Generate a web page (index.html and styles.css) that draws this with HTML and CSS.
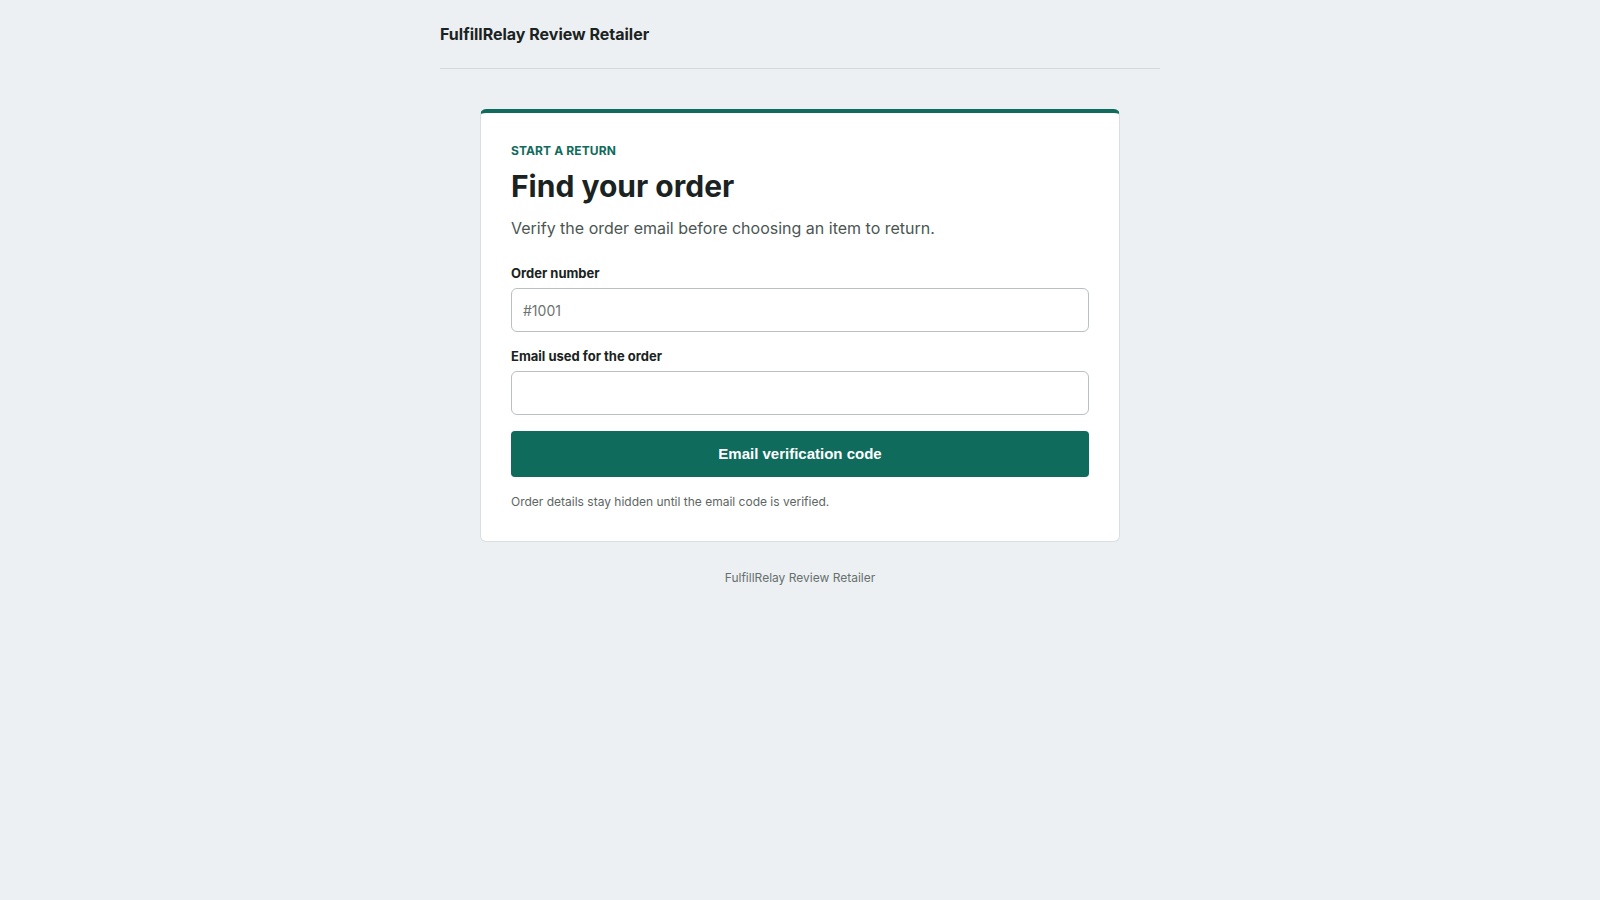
FILE: index.html
```html
<!DOCTYPE html>
<html lang="en">
<head>
<meta charset="utf-8">
<title>Start a return – FulfillRelay Review Retailer</title>
<link rel="stylesheet" href="styles.css">
</head>
<body>
  <div class="page">
    <header class="site-header">
      <span class="brand">FulfillRelay Review Retailer</span>
    </header>

    <main class="main">
      <section class="card">
        <p class="eyebrow">Start a return</p>
        <h1 class="title">Find your order</h1>
        <p class="lead">Verify the order email before choosing an item to return.</p>

        <form class="form" onsubmit="return false">
          <label class="field">
            <span class="field-label">Order number</span>
            <input class="input" type="text" placeholder="#1001">
          </label>
          <label class="field">
            <span class="field-label">Email used for the order</span>
            <input class="input" type="email">
          </label>
          <button class="button" type="submit">Email verification code</button>
        </form>

        <p class="hint">Order details stay hidden until the email code is verified.</p>
      </section>
    </main>

    <footer class="site-footer">FulfillRelay Review Retailer</footer>
  </div>
</body>
</html>
```

FILE: styles.css
```css
* {
  box-sizing: border-box;
}

html,
body {
  margin: 0;
  padding: 0;
}

body {
  background: #edf0f3;
  color: #1a2321;
  font-family: Inter, "Noto Sans", "Liberation Sans", sans-serif;
}

.page {
  width: 720px;
  margin: 0 auto;
}

.site-header {
  padding: 24px 0 24px;
  border-bottom: 1px solid #d3d8db;
}

.brand {
  display: block;
  font-size: 16px;
  line-height: 20px;
  font-weight: 700;
  color: #1a2321;
}

.main {
  padding: 40px 40px 0;
}

.card {
  background: #ffffff;
  border: 1px solid #d9dee2;
  border-top: 4px solid #0f6b5c;
  border-radius: 6px;
  padding: 30px;
}

.eyebrow {
  margin: 0;
  font-size: 12px;
  line-height: 15px;
  font-weight: 700;
  letter-spacing: 0.01em;
  text-transform: uppercase;
  color: #0f6b5c;
}

.title {
  margin: 10px 0 0;
  font-size: 30px;
  line-height: 36px;
  font-weight: 700;
  color: #1a2321;
}

.lead {
  margin: 12px 0 0;
  font-size: 16px;
  line-height: 24px;
  color: #4b5653;
}

.form {
  display: flex;
  flex-direction: column;
  gap: 16px;
  margin-top: 25px;
}

.field {
  display: flex;
  flex-direction: column;
  gap: 7px;
}

.field-label {
  font-size: 13px;
  line-height: 16px;
  font-weight: 700;
  color: #1a2321;
}

.input {
  height: 44px;
  width: 100%;
  padding: 0 11px;
  border: 1px solid #b9bfc3;
  border-radius: 6px;
  background: #ffffff;
  font-family: Inter, "Noto Sans", sans-serif;
  font-size: 14px;
  color: #1a2321;
  outline: none;
}

.input::placeholder {
  color: #6c7471;
}

.button {
  height: 46px;
  width: 100%;
  padding: 0 0 2px;
  border: 0;
  border-radius: 4px;
  background: #0f6b5c;
  color: #ffffff;
  font-family: "Liberation Sans", Arial, sans-serif;
  font-size: 15px;
  font-weight: 700;
  cursor: pointer;
}

.hint {
  margin: 16px 0 0;
  font-size: 12px;
  line-height: 18px;
  color: #5d6663;
}

.site-footer {
  margin-top: 27px;
  text-align: center;
  font-size: 12px;
  line-height: 18px;
  color: #66706d;
}
```
